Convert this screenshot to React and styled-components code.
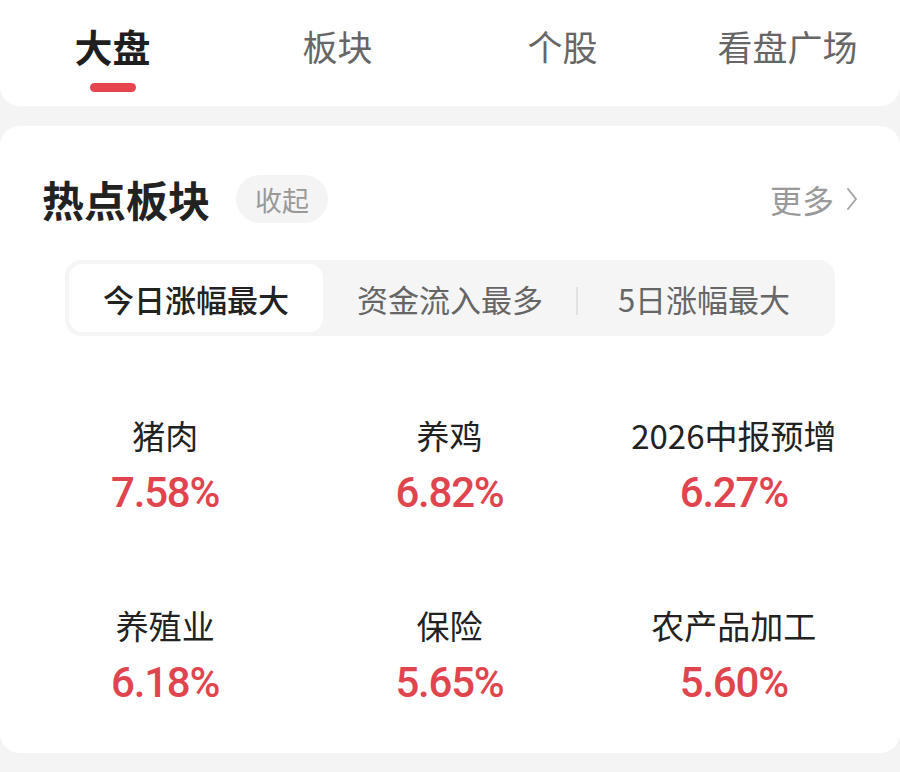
import React, { useState } from "react";
import styled, { createGlobalStyle } from "styled-components";

const GlobalStyle = createGlobalStyle`
  html, body {
    margin: 0;
    padding: 0;
    background: #f4f4f4;
    font-family: "Noto Sans CJK SC", "Noto Sans", sans-serif;
    color: #222;
  }
  * { box-sizing: border-box; }
`;

const Page = styled.div`
  width: 900px;
  min-height: 772px;
  background: #f4f4f4;
`;

const TopBar = styled.div`
  background: #fff;
  border-radius: 0 0 20px 20px;
  padding: 22px 0 14px;
  display: grid;
  grid-template-columns: repeat(4, 1fr);
`;

const Tab = styled.div`
  display: flex;
  flex-direction: column;
  align-items: center;
  cursor: pointer;
`;

const TabLabel = styled.span`
  font-size: ${(p) => (p.$active ? "38px" : "35px")};
  line-height: 48px;
  font-weight: ${(p) => (p.$active ? 700 : 400)};
  color: ${(p) => (p.$active ? "#1f1f1f" : "#666")};
`;

const Indicator = styled.span`
  margin-top: 13px;
  width: 46px;
  height: 9px;
  border-radius: 5px;
  background: ${(p) => (p.$active ? "#e6454e" : "transparent")};
`;

const Card = styled.section`
  margin-top: 20px;
  background: #fff;
  border-radius: 20px;
  padding: 49px 24px 45px 23px;
`;

const Header = styled.div`
  display: flex;
  align-items: center;
  padding: 0 18px 0 19px;
`;

const Title = styled.h2`
  margin: 0;
  font-size: 42px;
  line-height: 48px;
  font-weight: 700;
  color: #222;
`;

const Pill = styled.span`
  margin-left: 26px;
  height: 48px;
  padding: 0 19px;
  border-radius: 24px;
  background: #f4f4f4;
  color: #999;
  font-size: 27px;
  display: inline-flex;
  align-items: center;
`;

const More = styled.span`
  margin-left: auto;
  display: inline-flex;
  align-items: center;
  gap: 12px;
  color: #999;
  font-size: 32px;
  line-height: 48px;
`;

const Segments = styled.div`
  margin: 37px 41px 0 42px;
  height: 76px;
  padding: 4px;
  border-radius: 16px;
  background: #f5f5f5;
  display: grid;
  grid-template-columns: repeat(3, 1fr);
`;

const Segment = styled.div`
  position: relative;
  display: flex;
  align-items: center;
  justify-content: center;
  border-radius: 14px;
  background: ${(p) => (p.$active ? "#fff" : "transparent")};
  color: ${(p) => (p.$active ? "#222" : "#666")};
  font-weight: ${(p) => (p.$active ? 500 : 400)};
  font-size: 31px;
  cursor: pointer;
`;

const Divider = styled.span`
  position: absolute;
  left: -1px;
  top: 23px;
  width: 2px;
  height: 28px;
  background: #e2e2e2;
`;

const Grid = styled.div`
  margin-top: 77px;
  display: grid;
  grid-template-columns: repeat(3, 1fr);
  row-gap: 85px;
`;

const Cell = styled.div`
  display: flex;
  flex-direction: column;
  align-items: center;
  gap: 11px;
`;

const Name = styled.span`
  font-size: 33px;
  line-height: 44px;
  color: #222;
  white-space: nowrap;
`;

const Change = styled.span`
  font-family: Roboto, "Liberation Sans", sans-serif;
  font-size: 42px;
  line-height: 50px;
  font-weight: 500;
  letter-spacing: -1.2px;
  color: ${(p) => (p.$up ? "#e0454e" : "#1aa260")};
`;

const Chevron = () => (
  <svg width="12" height="24" viewBox="0 0 12 24" fill="none">
    <polyline points="2,2 10,12 2,22" stroke="#a6a6a6" strokeWidth="2" strokeLinecap="round" strokeLinejoin="round" />
  </svg>
);

const tabs = ["大盘", "板块", "个股", "看盘广场"];
const filters = ["今日涨幅最大", "资金流入最多", "5日涨幅最大"];
const sectors = [
  { name: "猪肉", pct: 7.58 },
  { name: "养鸡", pct: 6.82 },
  { name: "2026中报预增", pct: 6.27 },
  { name: "养殖业", pct: 6.18 },
  { name: "保险", pct: 5.65 },
  { name: "农产品加工", pct: 5.6 },
];

export default function App() {
  const [tab, setTab] = useState(0);
  const [filter, setFilter] = useState(0);

  return (
    <Page>
      <GlobalStyle />
      <TopBar>
        {tabs.map((t, i) => (
          <Tab key={t} onClick={() => setTab(i)}>
            <TabLabel $active={i === tab}>{t}</TabLabel>
            <Indicator $active={i === tab} />
          </Tab>
        ))}
      </TopBar>

      <Card>
        <Header>
          <Title>热点板块</Title>
          <Pill>收起</Pill>
          <More>
            更多
            <Chevron />
          </More>
        </Header>

        <Segments>
          {filters.map((f, i) => (
            <Segment key={f} $active={i === filter} onClick={() => setFilter(i)}>
              {i > 0 && i !== filter && i - 1 !== filter && <Divider />}
              {f}
            </Segment>
          ))}
        </Segments>

        <Grid>
          {sectors.map((s) => (
            <Cell key={s.name}>
              <Name>{s.name}</Name>
              <Change $up={s.pct >= 0}>{s.pct.toFixed(2)}%</Change>
            </Cell>
          ))}
        </Grid>
      </Card>
    </Page>
  );
}
